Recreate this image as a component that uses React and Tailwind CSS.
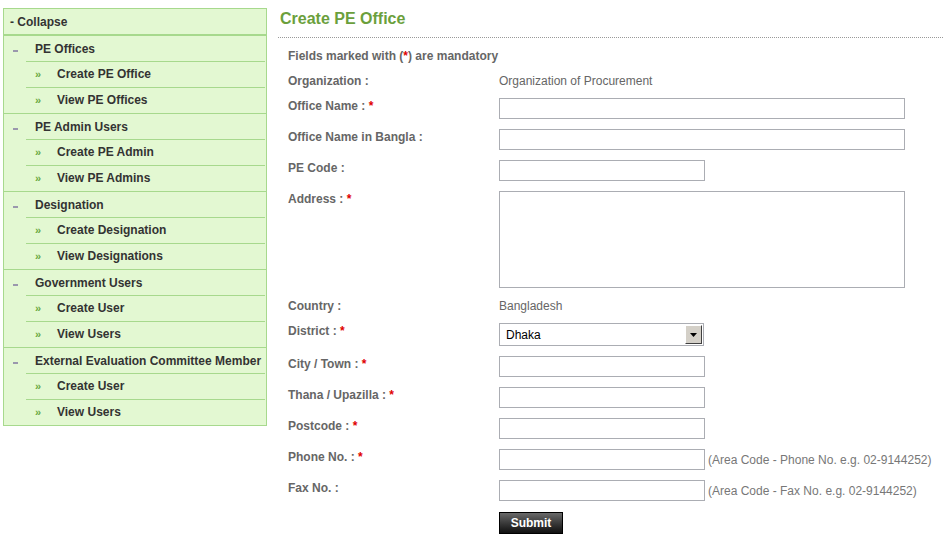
import { useState } from "react";

const menu = [
    { title: "PE Offices", items: ["Create PE Office", "View PE Offices"] },
    { title: "PE Admin Users", items: ["Create PE Admin", "View PE Admins"] },
    { title: "Designation", items: ["Create Designation", "View Designations"] },
    { title: "Government Users", items: ["Create User", "View Users"] },
    { title: "External Evaluation Committee Member", items: ["Create User", "View Users"] },
];

function Sidebar() {
    return (
        <div className="w-[264px] shrink-0 border border-[#a7d98d] bg-[#e3f8d2] text-[12px] font-bold text-[#333]">
            <div className="flex h-[27px] items-center border-b-2 border-[#a7d98d] pl-[6px]">- Collapse</div>
            {menu.map((section, i) => (
                <div key={i} className={i < menu.length - 1 ? "border-b border-[#a7d98d]" : ""}>
                    {/* Section header */}
                    <div className="flex">
                        <div className="flex w-[22px] items-center pl-[9px]">
                            <span className="mt-[4px] block h-[2px] w-[5px] bg-[#9a98ad]" />
                        </div>
                        <div className="flex h-[26px] flex-1 items-center border-b border-[#a7d98d] pl-[9px] mr-[1px]">
                            {section.title}
                        </div>
                    </div>
                    {/* Sub items */}
                    {section.items.map((item, j) => (
                        <div
                            key={j}
                            className={
                                "ml-[22px] mr-[1px] flex items-center pb-[1px] pl-[9px] " +
                                (j < section.items.length - 1 ? "h-[26px] border-b border-[#a7d98d]" : "h-[25px]")
                            }
                        >
                            <span className="w-[22px] text-[11px] font-bold text-[#6aa83f]">»</span>
                            <span>{item}</span>
                        </div>
                    ))}
                </div>
            ))}
        </div>
    );
}

function Req() {
    return <span className="text-[#e00000]"> *</span>;
}

function Row({ label, required, children }) {
    return (
        <div className="flex py-[5px]">
            <div className="w-[211px] shrink-0 pt-[1px] leading-[14px] font-bold text-[#666]">
                {label}
                {required && <Req />}
            </div>
            <div className="flex items-center">{children}</div>
        </div>
    );
}

function TextRow({ label, value }) {
    return (
        <div className="flex h-[25px] items-center">
            <div className="w-[211px] shrink-0 font-bold text-[#666]">{label}</div>
            <div className="text-[#666]">{value}</div>
        </div>
    );
}

const inputCls = "h-[21px] border border-[#abadb3] bg-white px-1 text-[12px] outline-none";

export default function App() {
    const [district, setDistrict] = useState("Dhaka");

    return (
        <div className="flex min-h-screen bg-white pt-2 pl-[3px] font-['Liberation_Sans',Arial,sans-serif] text-[12px]">
            <div>
                <Sidebar />
            </div>

            <div className="ml-[11px] flex-1">
                <div className="border-b border-dotted border-[#999] pb-[9px] pl-[2px] pt-[2px]">
                    <h1 className="text-[16px] leading-[18px] font-bold text-[#6b9f3c]">Create PE Office</h1>
                </div>

                <div className="pl-[10px] pt-[5px]">
                    <div className="flex h-[25px] items-center font-bold text-[#666]">
                        Fields marked with (<span className="text-[#e00000]">*</span>) are mandatory
                    </div>
                    <TextRow label="Organization :" value="Organization of Procurement" />

                    <Row label="Office Name :" required>
                        <input className={inputCls + " w-[406px]"} />
                    </Row>
                    <Row label="Office Name in Bangla :">
                        <input className={inputCls + " w-[406px]"} />
                    </Row>
                    <Row label="PE Code :">
                        <input className={inputCls + " w-[206px]"} />
                    </Row>
                    <Row label="Address :" required>
                        <textarea className="h-[97px] w-[406px] resize-none border border-[#abadb3] bg-white outline-none" />
                    </Row>

                    <TextRow label="Country :" value="Bangladesh" />

                    <Row label="District :" required>
                        <div className="relative flex h-[23px] w-[205px] items-center border border-[#abadb3] bg-white pl-[6px] text-[12px] text-black">
                            <select
                                value={district}
                                onChange={(e) => setDistrict(e.target.value)}
                                className="absolute inset-0 opacity-0"
                            >
                                <option>Dhaka</option>
                                <option>Chittagong</option>
                                <option>Khulna</option>
                            </select>
                            {district}
                            {/* classic windows-style drop button */}
                            <span className="absolute right-[1px] top-[1px] flex h-[19px] w-[17px] items-center justify-center border border-t-white border-l-white border-r-[#404040] border-b-[#404040] bg-[#d4d0c8]">
                                <svg width="7" height="4" viewBox="0 0 7 4">
                                    <path d="M0 0h7L3.5 4z" fill="#000" />
                                </svg>
                            </span>
                        </div>
                    </Row>
                    <Row label="City / Town :" required>
                        <input className={inputCls + " w-[206px]"} />
                    </Row>
                    <Row label="Thana / Upazilla :" required>
                        <input className={inputCls + " w-[206px]"} />
                    </Row>
                    <Row label="Postcode :" required>
                        <input className={inputCls + " w-[206px]"} />
                    </Row>
                    <Row label="Phone No. :" required>
                        <input className={inputCls + " w-[206px]"} />
                        <span className="ml-[3px] text-[#777]">(Area Code - Phone No. e.g. 02-9144252)</span>
                    </Row>
                    <Row label="Fax No. :">
                        <input className={inputCls + " w-[206px]"} />
                        <span className="ml-[3px] text-[#777]">(Area Code - Fax No. e.g. 02-9144252)</span>
                    </Row>

                    <div className="flex pt-[6px]">
                        <div className="w-[211px] shrink-0" />
                        <button className="h-[22px] w-[64px] border border-black bg-gradient-to-b from-[#6a6a6a] to-[#111] text-[12px] font-bold text-white">
                            Submit
                        </button>
                    </div>
                </div>
            </div>
        </div>
    );
}
